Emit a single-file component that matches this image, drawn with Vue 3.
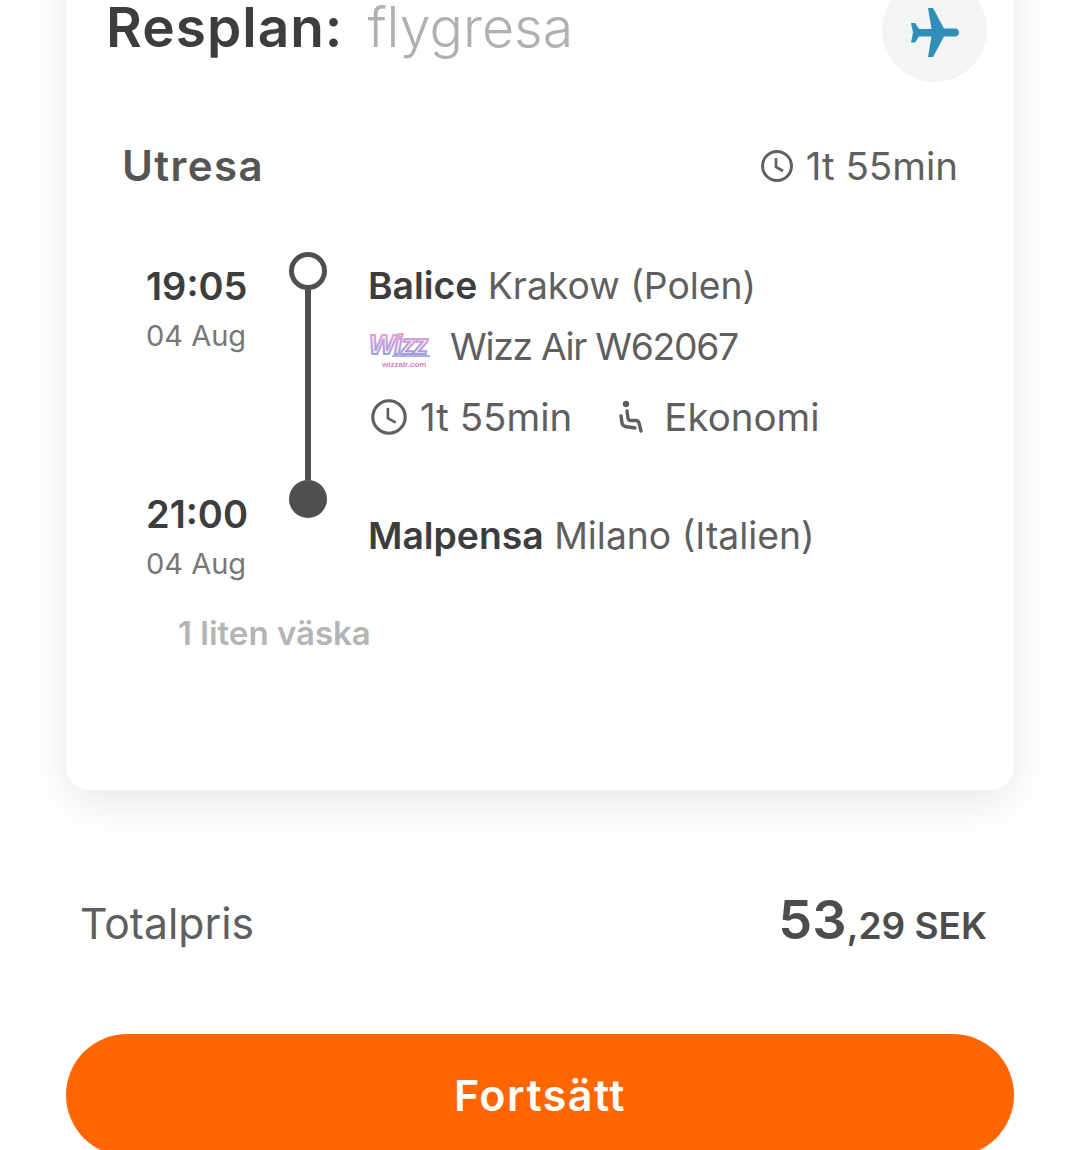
<script setup>
const title = "Resplan:";
const kind = "flygresa";
const duration = "1t 55min";
</script>

<template>
  <div class="page">
    <div class="card">
      <div class="head">
        <div class="title">
          <span class="title-main">{{ title }}</span>
          <span class="title-kind">{{ kind }}</span>
        </div>
        <div class="plane-badge">
          <svg class="plane" width="48" height="49" viewBox="0 0 48 49">
            <path
              fill="#2f8fb8"
              d="M17 0h5l11 20.500h11.500c2 0 3.500 1.800 3.500 4s-1.500 4-3.500 4H33L22 49h-5l3.500-20.500H8L4 34.500H0L2 24.500 0 15h4l4 6h12.500L17 0z"
            />
          </svg>
        </div>
      </div>

      <div class="leg-head">
        <span class="leg-name">Utresa</span>
        <span class="leg-time">
          <svg class="clock" width="34" height="34" viewBox="0 0 34 34">
            <circle cx="17" cy="17" r="14.500" fill="none" stroke="#5f5f5f" stroke-width="3" />
            <path d="M16 9v9l7 4" fill="none" stroke="#5f5f5f" stroke-width="2.600" />
          </svg>
          {{ duration }}
        </span>
      </div>

      <div class="timeline">
        <div class="times">
          <div class="time-block">
            <div class="time">19:05</div>
            <div class="date">04 Aug</div>
          </div>
          <div class="time-block">
            <div class="time">21:00</div>
            <div class="date">04 Aug</div>
          </div>
        </div>

        <div class="rail">
          <span class="dot-open"></span>
          <span class="line"></span>
          <span class="dot-full"></span>
        </div>

        <div class="details">
          <div class="place"><b>Balice</b> Krakow (Polen)</div>
          <div class="carrier">
            <svg class="wizz" width="64" height="42" viewBox="0 0 64 42">
              <defs>
                <linearGradient id="wizzGrad" x1="0" y1="0" x2="0" y2="1">
                  <stop offset="0" stop-color="#f0a0d8" />
                  <stop offset="1" stop-color="#8f9fe0" />
                </linearGradient>
              </defs>
              <text
                x="1"
                y="28"
                font-family="Liberation Sans, sans-serif"
                font-size="28"
                font-style="italic"
                font-weight="700"
                letter-spacing="-1"
                fill="#fbeef8"
                stroke="url(#wizzGrad)"
                stroke-width="2"
              >Wizz</text>
              <rect x="24" y="29" width="38" height="2" fill="#a9b2e6" />
              <text
                x="14"
                y="41"
                font-family="Liberation Sans, sans-serif"
                font-size="8"
                font-weight="700"
                fill="#df7fbd"
              >wizzair.com</text>
            </svg>
            <span class="flight">Wizz Air W62067</span>
          </div>
          <div class="meta">
            <span class="meta-item">
              <svg class="meta-clock" width="38" height="38" viewBox="0 0 34 34">
                <circle cx="17" cy="17" r="14.500" fill="none" stroke="#5f5f5f" stroke-width="2.800" />
                <path d="M16 9v9l7 4" fill="none" stroke="#5f5f5f" stroke-width="2.400" />
              </svg>
              {{ duration }}
            </span>
            <span class="meta-item">
              <svg class="seat" width="30" height="38" viewBox="0 0 30 38">
                <circle cx="10" cy="6" r="3.200" fill="#5f5f5f" />
                <path
                  d="M11 13l1 7c.2 1.500 1 2.500 2.500 2.500H20c1.500 0 2.500 1 3 2.500l2 8M5 18l1 7c.3 2 1.500 3 3 3.500l10 1.500"
                  fill="none"
                  stroke="#5f5f5f"
                  stroke-width="3.400"
                  stroke-linecap="round"
                />
              </svg>
              Ekonomi
            </span>
          </div>
          <div class="place place-end"><b>Malpensa</b> Milano (Italien)</div>
        </div>
      </div>

      <div class="bag">1 liten väska</div>
    </div>

    <div class="total">
      <span class="total-label">Totalpris</span>
      <span class="total-price"><span class="big">53</span>,29 SEK</span>
    </div>

    <button class="continue">Fortsätt</button>
  </div>
</template>

<style scoped>
.page {
  width: 1080px;
  height: 1150px;
  box-sizing: border-box;
  padding: 0 66px;
  overflow: hidden;
  background: #fff;
  font-family: Inter, Roboto, "Liberation Sans", sans-serif;
  color: #5f5f5f;
}
.card {
  margin-top: -47px;
  height: 837px;
  box-sizing: border-box;
  padding: 24px 27px 0 40px;
  background: #fff;
  border-radius: 24px;
  box-shadow: 0 14px 44px rgba(0, 0, 0, 0.09);
}
.head {
  display: flex;
  justify-content: space-between;
  align-items: flex-start;
}
.title {
  display: flex;
  gap: 24px;
  align-items: baseline;
  padding-top: 18px;
  line-height: 64px;
}
.title-main {
  font-size: 55px;
  font-weight: 600;
  letter-spacing: 1px;
  color: #3d3d3d;
}
.title-kind {
  font-size: 55.500px;
  font-weight: 300;
  color: #b0b0b0;
}
.plane-badge {
  width: 105px;
  height: 105px;
  border-radius: 50%;
  background: #f3f4f4;
  display: flex;
  align-items: center;
  justify-content: center;
}
.plane {
  margin-top: 5px;
}
.leg-head {
  display: flex;
  justify-content: space-between;
  align-items: center;
  margin-top: 61px;
  padding: 0 29px 0 16px;
}
.leg-name {
  font-size: 42px;
  font-weight: 600;
  letter-spacing: 1.400px;
  line-height: 46px;
  color: #555;
}
.leg-time {
  display: flex;
  align-items: center;
  gap: 12px;
  font-size: 38.500px;
  line-height: 46px;
}
.timeline {
  display: flex;
  margin-top: 63px;
  padding-left: 40px;
}
.times {
  width: 102px;
  display: flex;
  flex-direction: column;
  gap: 137px;
  padding-top: 11px;
}
.time {
  font-size: 38px;
  font-weight: 600;
  line-height: 46px;
  color: #3d3d3d;
}
.date {
  margin-top: 9px;
  font-size: 29px;
  line-height: 36px;
  color: #777;
}
.rail {
  width: 38px;
  margin-left: 41px;
  display: flex;
  flex-direction: column;
  align-items: center;
  height: 266px;
}
.dot-open {
  width: 38px;
  height: 38px;
  box-sizing: border-box;
  border: 5px solid #4f4f4f;
  border-radius: 50%;
}
.line {
  flex: 1;
  width: 6px;
  background: #4f4f4f;
}
.dot-full {
  width: 38px;
  height: 38px;
  border-radius: 50%;
  background: #4f4f4f;
}
.details {
  margin-left: 41px;
  padding-top: 11px;
  font-size: 37.300px;
}
.place {
  line-height: 46px;
}
.place b {
  font-weight: 600;
  color: #3d3d3d;
}
.carrier {
  display: flex;
  align-items: center;
  gap: 18px;
  margin-top: 15px;
  line-height: 46px;
}
.flight {
  letter-spacing: -1.300px;
}
.meta {
  display: flex;
  gap: 44px;
  margin-top: 24px;
  font-size: 38.500px;
  line-height: 46px;
}
.meta-item {
  display: flex;
  align-items: center;
  gap: 12px;
}
.meta-clock {
  margin-left: 2px;
}
.seat {
  margin-right: 6px;
}
.place-end {
  margin-top: 73px;
}
.bag {
  margin-top: 31px;
  padding-left: 72px;
  font-size: 33px;
  font-weight: 600;
  line-height: 40px;
  color: #b4b4b4;
}
.total {
  display: flex;
  justify-content: space-between;
  align-items: baseline;
  margin-top: 97px;
  padding: 0 27px 0 14px;
}
.total-label {
  font-size: 42.700px;
  color: #5f5f5f;
}
.total-price {
  font-size: 37px;
  font-weight: 600;
  color: #4d4d4d;
}
.big {
  font-size: 54px;
}
.continue {
  display: block;
  width: 100%;
  height: 122px;
  margin-top: 82px;
  border: none;
  border-radius: 61px;
  background: #ff6600;
  color: #fff;
  font-family: inherit;
  font-size: 43px;
  font-weight: 600;
  letter-spacing: 1.500px;
}
</style>
